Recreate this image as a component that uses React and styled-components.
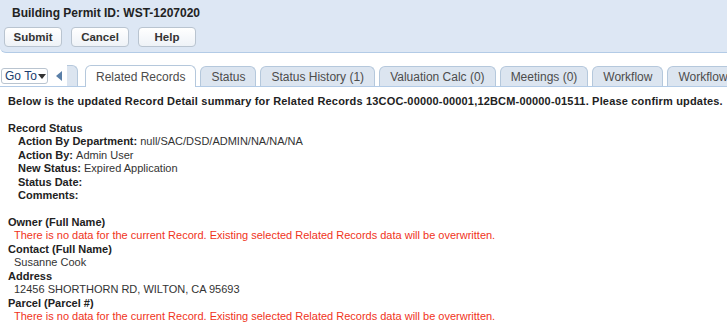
import React from 'react'
import styled, { createGlobalStyle } from 'styled-components'

const Global = createGlobalStyle`
  body {
    margin: 0;
    background: #fff;
    font-family: Arial, "Liberation Sans", sans-serif;
    color: #333;
  }
`
const Page = styled.div`
  width: 727px;
  height: 326px;
  overflow: hidden;
`
const Header = styled.header`
  height: 53px;
  background: #dde7f4;
  border-bottom: 1px solid #b3cbe6;
  border-bottom-left-radius: 6px;
  padding: 6px 4px 0;
  box-sizing: border-box;
`
const Title = styled.h1`
  margin: 0 0 6px 8px;
  font-size: 12px;
  font-weight: bold;
  color: #222;
  line-height: 15px;
`
const Buttons = styled.div`
  display: flex;
  gap: 9px;
`
const Button = styled.button`
  width: 58px;
  height: 20px;
  font-family: inherit;
  font-size: 11.5px;
  font-weight: bold;
  color: #333;
  background: linear-gradient(#ffffff, #eef2f7);
  border: 1px solid #b9c4d0;
  border-radius: 4px;
  padding: 0;
`
const TabBar = styled.div`
  display: flex;
  align-items: flex-end;
  margin-top: 11px;
  height: 22px;
  border-bottom: 1px solid #b3cbe6;
`
const GoTo = styled.button`
  flex: none;
  align-self: center;
  margin: 2px 0 0 1px;
  height: 16px;
  width: 47px;
  padding: 0 0 0 3px;
  text-align: left;
  white-space: nowrap;
  font-family: inherit;
  font-size: 12px;
  color: #1a3d6e;
  background: #fff;
  border: 1px solid #b9c4d0;
  border-radius: 3px;
  &::after {
    content: '';
    display: inline-block;
    margin-left: 1px;
    border-left: 4px solid transparent;
    border-right: 4px solid transparent;
    border-top: 5px solid #333;
    vertical-align: 1px;
  }
`
const Arrow = styled.div`
  flex: none;
  align-self: center;
  margin: 2px 0 0 8px;
  width: 0;
  height: 0;
  border-top: 5px solid transparent;
  border-bottom: 5px solid transparent;
  border-right: 6px solid #5a7fa8;
`
const HiddenTab = styled.div`
  flex: none;
  margin-left: 5px;
  width: 10px;
  height: 20px;
  background: #dce5f0;
  border: 1px solid #b5c8dc;
  border-left: none;
  border-bottom: none;
  border-top-right-radius: 6px;
`
const Tab = styled.div`
  flex: none;
  white-space: nowrap;
  margin-left: ${p => p.first ? 7 : 4}px;
  height: ${p => p.active ? 22 : 20}px;
  padding: 0 10px;
  display: flex;
  align-items: center;
  font-size: 12px;
  color: #4c4c4c;
  background: ${p => p.active ? '#fff' : '#dce5f0'};
  border: 1px solid #b5c8dc;
  border-bottom: none;
  border-radius: 6px 6px 0 0;
  box-sizing: border-box;
  margin-bottom: ${p => p.active ? -1 : 0}px;
`
const Content = styled.div`
  padding: 8px 8px 0;
  font-size: 11px;
  line-height: 13.5px;
`
const Intro = styled.p`
  margin: 0 0 13px;
  font-weight: bold;
  color: #222;
  letter-spacing: 0.18px;
  white-space: nowrap;
`
const Label = styled.div`
  font-weight: bold;
  color: #222;
  padding-left: ${p => p.indent || 0}px;
  margin-top: ${p => p.gap || 0}px;
`
const Value = styled.span`
  font-weight: normal;
  color: #333;
`
const Line = styled.div`
  padding-left: 6px;
  color: ${p => p.warn ? '#f0331a' : '#333'};
`

const tabs = [
  'Status',
  'Status History (1)',
  'Valuation Calc (0)',
  'Meetings (0)',
  'Workflow',
  'Workflow',
]

const warn = 'There is no data for the current Record. Existing selected Related Records data will be overwritten.'

export default function App() {
  return (
    <Page>
      <Global />
      <Header>
        <Title>Building Permit ID: WST-1207020</Title>
        <Buttons>
          <Button>Submit</Button>
          <Button>Cancel</Button>
          <Button>Help</Button>
        </Buttons>
      </Header>
      <TabBar>
        <GoTo>Go To</GoTo>
        <Arrow />
        <HiddenTab />
        <Tab first active>Related Records</Tab>
        {tabs.map((t, i) => <Tab key={i}>{t}</Tab>)}
      </TabBar>
      <Content>
        <Intro>Below is the updated Record Detail summary for Related Records 13COC-00000-00001,12BCM-00000-01511. Please confirm updates.</Intro>
        <Label>Record Status</Label>
        <Label indent={10}>Action By Department: <Value>null/SAC/DSD/ADMIN/NA/NA/NA</Value></Label>
        <Label indent={10}>Action By: <Value>Admin User</Value></Label>
        <Label indent={10}>New Status: <Value>Expired Application</Value></Label>
        <Label indent={10}>Status Date:</Label>
        <Label indent={10}>Comments:</Label>
        <Label gap={13}>Owner (Full Name)</Label>
        <Line warn>{warn}</Line>
        <Label>Contact (Full Name)</Label>
        <Line>Susanne Cook</Line>
        <Label>Address</Label>
        <Line>12456 SHORTHORN RD, WILTON, CA 95693</Line>
        <Label>Parcel (Parcel #)</Label>
        <Line warn>{warn}</Line>
      </Content>
    </Page>
  )
}
